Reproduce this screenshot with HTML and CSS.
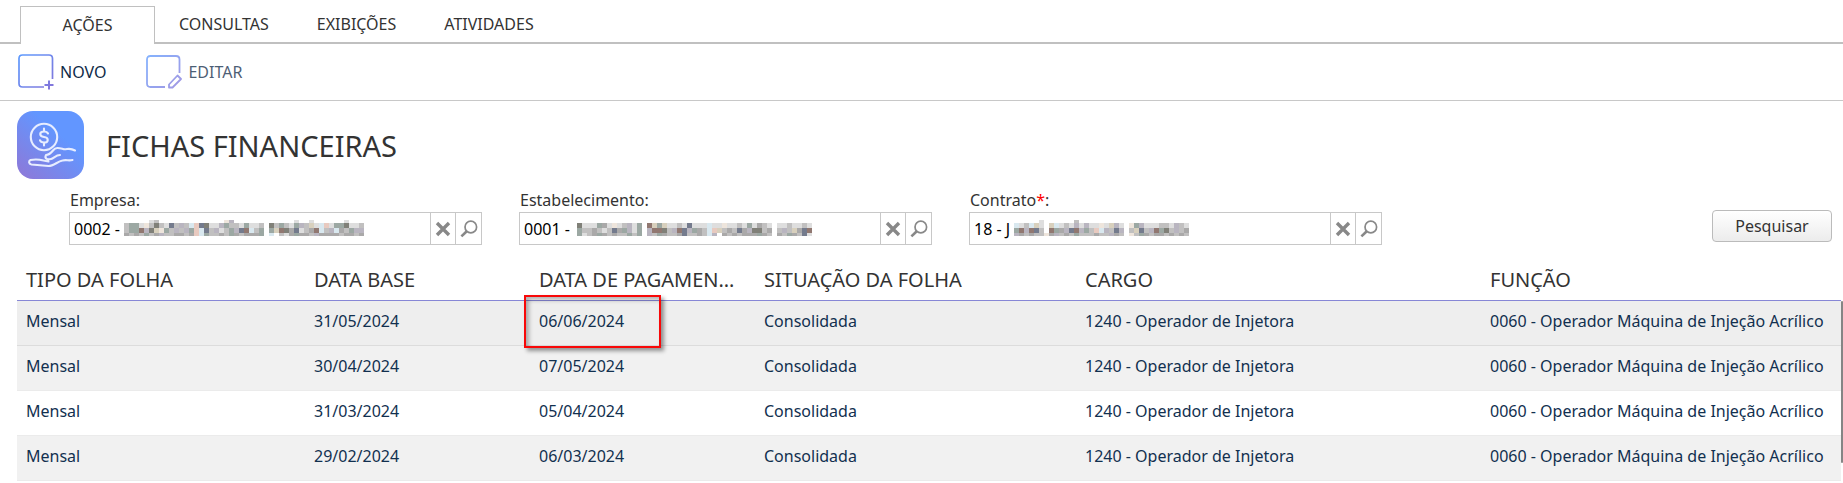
FILE: index.html
```html
<!DOCTYPE html>
<html lang="pt-BR">
<head>
<meta charset="utf-8">
<title>Fichas Financeiras</title>
<link rel="stylesheet" href="styles.css">
</head>
<body>
<svg class="defs" aria-hidden="true">
  <defs>
    <linearGradient id="stroke" gradientUnits="userSpaceOnUse" x1="0" y1="0" x2="36" y2="36"><stop offset="0" stop-color="#5c9bff"/><stop offset="1" stop-color="#8573d8"/></linearGradient>
    <symbol id="clear" viewBox="0 0 16 16"><path d="M2 2l12 12M14 2L2 14" stroke="#888" stroke-width="3.4" fill="none"/></symbol>
    <symbol id="search" viewBox="0 0 18 18"><circle cx="10.8" cy="7" r="5.8" fill="none" stroke="#888" stroke-width="1.7"/><path d="M6.8 11.2L1.4 16.4" stroke="#888" stroke-width="2.6"/></symbol>
  </defs>
</svg>
<nav class="tabs">
  <a class="tab active" href="#acoes">AÇÕES</a>
  <a class="tab" href="#consultas">CONSULTAS</a>
  <a class="tab" href="#exibicoes">EXIBIÇÕES</a>
  <a class="tab" href="#atividades">ATIVIDADES</a>
</nav>
<div class="toolbar">
  <button class="tool" type="button">
    <svg width="36" height="36" viewBox="0 0 36 36" fill="none" stroke="url(#stroke)"><path stroke-width="1.7" d="M26 33H4.500Q1 33 1 29.500V4.500Q1 1 4.500 1H31Q34.500 1 34.500 4.500V25"/><path stroke-width="2" d="M31 26.500v9M26.500 31h9"/></svg>
    <span>NOVO</span>
  </button>
  <button class="tool muted" type="button">
    <svg width="36" height="36" viewBox="0 0 36 36" fill="none" stroke="url(#stroke)"><path stroke-width="1.800" d="M19 33H4.500Q1 33 1 29.500V5.500Q1 2 4.500 2H30Q33.500 2 33.500 5.500V19"/><path stroke-width="1.800" stroke-linejoin="round" d="M23 30.500l8.500-9 3.500 3.500-8.500 8.500H23z"/></svg>
    <span>EDITAR</span>
  </button>
</div>
<main>
  <header class="heading">
    <svg class="logo" width="67" height="68" viewBox="0 0 67 68" fill="none" stroke="#e7edff" stroke-width="2.100" stroke-linecap="round" stroke-linejoin="round">
      <defs><linearGradient id="tile" x1="0" y1="1" x2=".6" y2=".3"><stop offset="0" stop-color="#9077d6"/><stop offset="1" stop-color="#6296ff"/></linearGradient></defs>
      <rect width="67" height="68" rx="16" fill="url(#tile)" stroke="none"/>
      <circle cx="27" cy="26" r="13.200"/>
      <path d="M27 17.500v3M27 31.500v3M31 22.500c-1-2-3-2-4-2-5 0-5 5 0 5.500s5 5.500 0 5.500c-2 0-3.500-.5-4-2.200"/>
      <path d="M29 44c2 0 5-2 7-4.500 3-3.500 6-2.500 10-1.500 4 1 6-2 12 1.500M29 44c-2 4 2 5 5 4s5-4 9-4M13.500 49c-2 1-2 4 1 4.500l17 1.500c5 0 9-4.500 14-5.500 4-1 6 .5 10-.5M13.500 49c6-1 9-.5 13 .5l5 1"/>
    </svg>
    <h1>FICHAS FINANCEIRAS</h1>
  </header>
  <form class="filters">
    <div class="field">
      <label for="empresa">Empresa:</label>
      <div class="box"><input id="empresa" type="text" value="0002 -"><button type="button" aria-label="Limpar"><svg width="16" height="16"><use href="#clear"/></svg></button><button type="button" aria-label="Procurar"><svg width="18" height="18"><use href="#search"/></svg></button><svg class="mask mask-empresa" data-mask="empresa"></svg></div>
    </div>
    <div class="field">
      <label for="estabelecimento">Estabelecimento:</label>
      <div class="box"><input id="estabelecimento" type="text" value="0001 -"><button type="button" aria-label="Limpar"><svg width="16" height="16"><use href="#clear"/></svg></button><button type="button" aria-label="Procurar"><svg width="18" height="18"><use href="#search"/></svg></button><svg class="mask mask-estabelecimento" data-mask="estabelecimento"></svg></div>
    </div>
    <div class="field">
      <label for="contrato">Contrato<span class="required">*</span>:</label>
      <div class="box"><input id="contrato" type="text" value="18 - J"><button type="button" aria-label="Limpar"><svg width="16" height="16"><use href="#clear"/></svg></button><button type="button" aria-label="Procurar"><svg width="18" height="18"><use href="#search"/></svg></button><svg class="mask mask-contrato" data-mask="contrato"></svg></div>
    </div>
    <button class="submit" type="button">Pesquisar</button>
  </form>
  <div class="grid">
    <table>
      <colgroup><col class="c-tipo"><col class="c-data"><col class="c-data"><col class="c-situacao"><col class="c-cargo"><col></colgroup>
      <thead><tr><th>TIPO DA FOLHA</th><th>DATA BASE</th><th>DATA DE PAGAMENTO</th><th>SITUAÇÃO DA FOLHA</th><th>CARGO</th><th>FUNÇÃO</th></tr></thead>
      <tbody>
        <tr class="selected"><td>Mensal</td><td>31/05/2024</td><td class="marked">06/06/2024</td><td>Consolidada</td><td>1240 - Operador de Injetora</td><td>0060 - Operador Máquina de Injeção Acrílico</td></tr>
        <tr class="striped"><td>Mensal</td><td>30/04/2024</td><td>07/05/2024</td><td>Consolidada</td><td>1240 - Operador de Injetora</td><td>0060 - Operador Máquina de Injeção Acrílico</td></tr>
        <tr><td>Mensal</td><td>31/03/2024</td><td>05/04/2024</td><td>Consolidada</td><td>1240 - Operador de Injetora</td><td>0060 - Operador Máquina de Injeção Acrílico</td></tr>
        <tr class="striped"><td>Mensal</td><td>29/02/2024</td><td>06/03/2024</td><td>Consolidada</td><td>1240 - Operador de Injetora</td><td>0060 - Operador Máquina de Injeção Acrílico</td></tr>
      </tbody>
    </table>
    <div class="thumb"></div>
  </div>
</main>
<script src="masks.js"></script>
</body>
</html>
```
FILE: styles.css
```css
*, *::after { box-sizing: border-box; }
body { margin: 0; background: #fff; color: #333; font: 16px/20px "Noto Sans", sans-serif; }
button, input { font: inherit; color: inherit; }
.defs { position: absolute; width: 0; height: 0; }
.tabs { display: flex; align-items: flex-end; height: 44px; padding-left: 20px; box-shadow: inset 0 -2px #c0c0c0; }
.tab { height: 38px; padding: 8px 24px 0; color: #333; text-decoration: none; }
.tab.active { width: 135px; padding: 8px 0 0; text-align: center; background: #fff; border: 1px solid #c0c0c0; border-bottom: 0; }
.toolbar { display: flex; gap: 40px; height: 57px; padding: 10px 18px 0; border-bottom: 1px solid #c8c8c8; }
.tool { display: flex; align-items: center; gap: 6px; height: 36px; padding: 0; border: 0; background: none; color: #0f2a48; }
.tool.muted { opacity: .75; }
main { padding: 10px 0 0 17px; }
.heading { display: flex; align-items: center; gap: 22px; }
h1 { margin: 0; padding-top: 2px; font-size: 29px; line-height: 40px; font-weight: 400; }
.filters { display: flex; gap: 37px; align-items: flex-start; padding: 11px 11px 0 52px; }
.field { flex: 0 1 413px; }
.field label { display: block; padding-left: 1px; height: 22px; }
.required { color: red; }
.box { position: relative; display: flex; height: 33px; border: 1px solid #c8c8c8; }
.box input { flex: 1; min-width: 0; padding: 0 4px; border: 0; outline: 0; background: none; color: #000; }
.box button { display: flex; align-items: center; justify-content: center; width: 25px; padding: 0; border: 0; border-left: 1px solid #c8c8c8; background: #fff; }
.box button + button { width: 26px; }
.mask { position: absolute; top: 7px; width: 242px; height: 16px; }
.mask-empresa { left: 54px; }
.mask-estabelecimento { left: 57px; }
.mask-contrato { left: 44px; }
.submit { width: 120px; height: 32px; margin: 20px 0 0 auto; border: 1px solid #bbb; border-radius: 4px; background: linear-gradient(#fff, #ececec); color: #333; }
.grid { position: relative; padding-right: 2px; }
table { width: 100%; table-layout: fixed; border-collapse: separate; border-spacing: 0; }
.c-tipo { width: 288px; }
.c-data { width: 225px; }
.c-situacao { width: 321px; }
.c-cargo { width: 405px; }
th, td { padding: 0 9px; text-align: left; white-space: nowrap; }
th { height: 56px; padding-top: 14px; padding-right: 16px; font-size: 20px; line-height: 28px; font-weight: 400; overflow: hidden; text-overflow: ellipsis; border-bottom: 1px solid #8787d6; }
td { height: 45px; padding-bottom: 4px; color: #12304f; border-bottom: 1px solid #ebebeb; }
.selected td { background: #eee; border-color: #dcdcdc; }
.striped td { background: #f1f1f1; }
.marked { position: relative; }
.marked::after { content: ""; position: absolute; left: -6px; top: -6px; width: 137px; height: 53px; border: 2px solid #f80808; box-shadow: 3px 3px 4px rgba(0, 0, 0, .4), inset 3px 3px 4px rgba(0, 0, 0, .3); }
.thumb { position: absolute; right: 0; top: 56px; width: 2px; height: 162px; border-radius: 2px; background: #858585; }
```
FILE: masks.js
```javascript
const palette = {
  a: '#9ca8a3', b: '#c1c0c0', c: '#dedede', d: '#eee5dc', e: '#917871', f: '#747b8d',
  g: '#b9b5c0', h: '#808078', i: '#e8cac0', j: '#d9e8ef', k: '#aaa9a9', l: '#d8d0bd'
};

// Row tops and heights in pixels, followed by one letter per 5px block.
const bands = [[0, 3], [3, 5], [8, 5], [13, 3]];
const masks = {
  empresa: [
    '.....cb.............dg............c..c......c...',
    'baacdbhbcfbgbjifhccgabbcaccb.hbabcagblcjicaahccb',
    'baaeghldabgbgaijfbgcbagfejba.alehkfcbkejbgjkbagg',
    'kbkbabkgbbkkbkijabbkbakbkkka.j.bckakkbgkkkkbkkbk'
  ],
  estabelecimento: [
    '...............................................',
    'hcccakcdcbgca.elalccbcfcccjccdccbcackbc.ccbccbc',
    'abbkbcbfkagca.geehbgefgakbjilbkbfkghhbk.bgblkfe',
    'acbkakbkbbaba.gbakbbkfbbkbjg.kbkbkkkakb.kbakbfc'
  ],
  contrato: [
    '.....c......b......................',
    'jcbjlc.ljcbcgcgccdclgc.dagcccbbcgbc',
    'aegefb.eakgfegabijgbfg.blfbgeahbgbk',
    'gkbkbbdkgbkbabbbkbbgkb.dbakbkkbkbkb'
  ]
};

for (const svg of document.querySelectorAll('[data-mask]')) {
  masks[svg.dataset.mask].forEach((row, r) => {
    [...row].forEach((key, column) => {
      if (!palette[key]) return;
      const rect = document.createElementNS('http://www.w3.org/2000/svg', 'rect');
      rect.setAttribute('x', column * 5);
      rect.setAttribute('y', bands[r][0]);
      rect.setAttribute('width', 5);
      rect.setAttribute('height', bands[r][1]);
      rect.setAttribute('fill', palette[key]);
      svg.append(rect);
    });
  });
}
```
